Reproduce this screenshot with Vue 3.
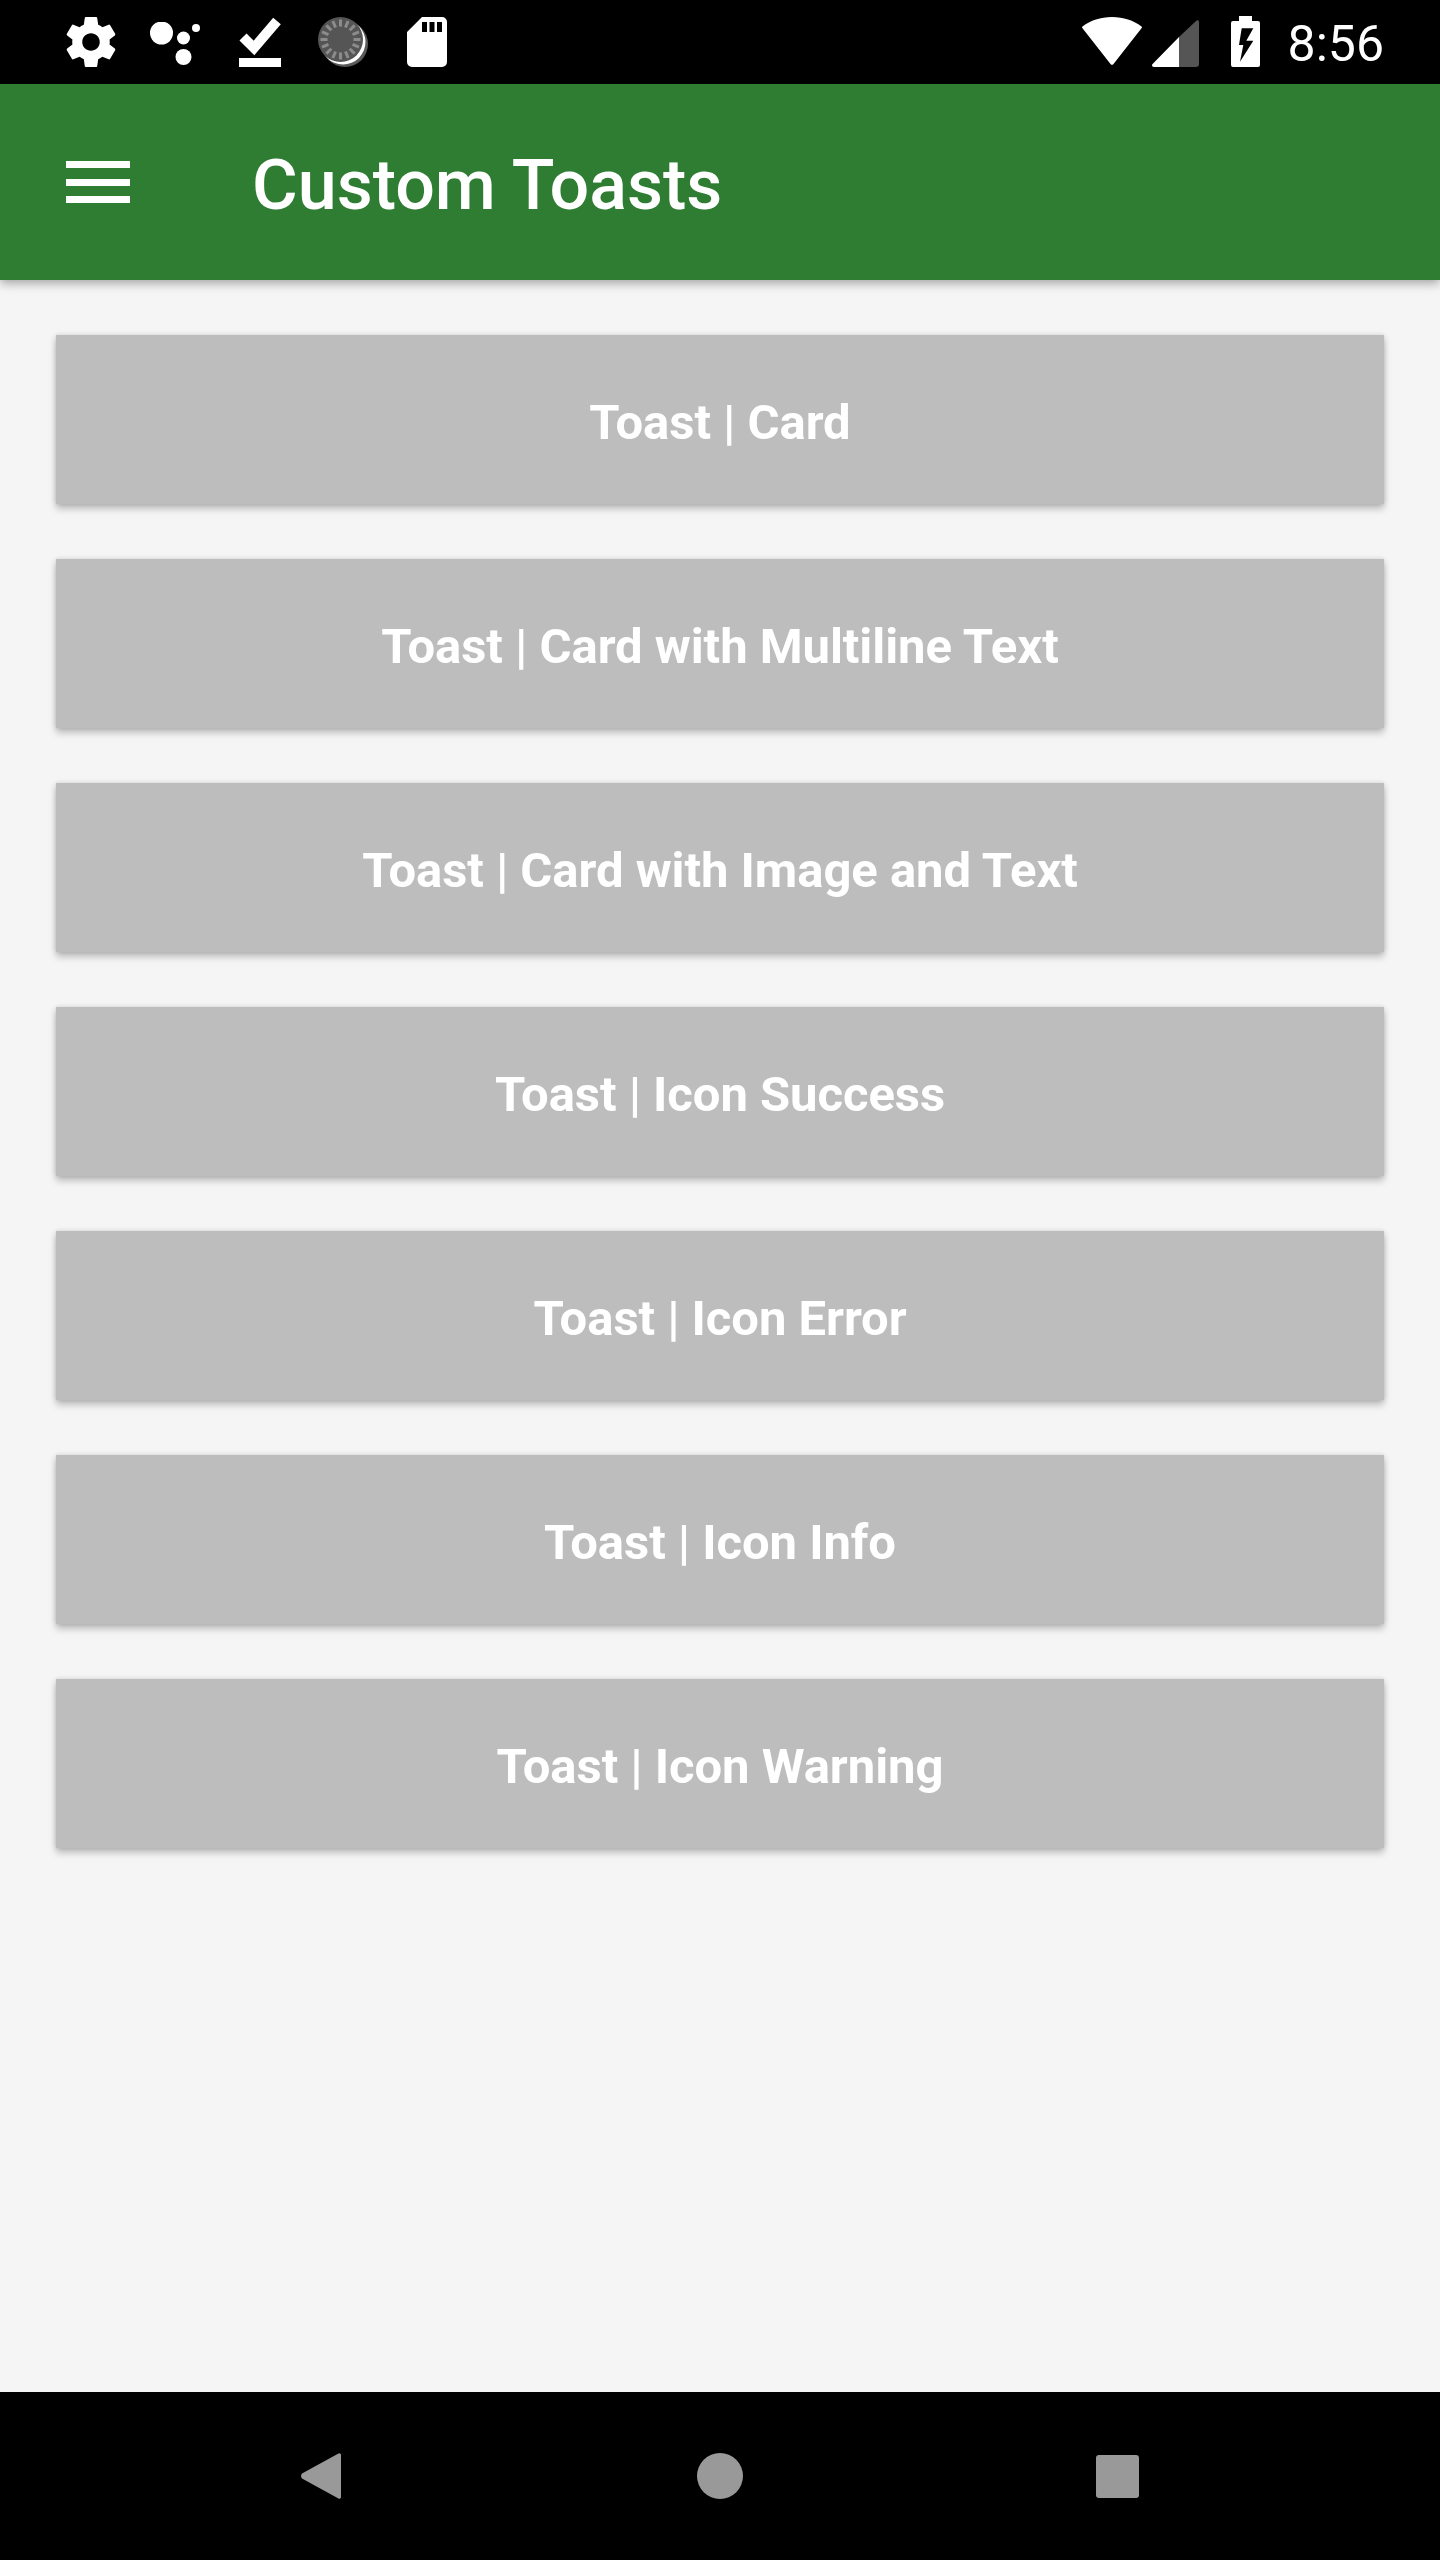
<template>
  <div class="screen">
    <div class="status-bar">
      <div class="status-left">
        <svg class="ic-gear" width="60" height="60" viewBox="0 0 24 24"><path fill="#fff" fill-rule="evenodd" d="M19.43 12.98c.04-.32.07-.64.07-.98s-.03-.66-.07-.98l2.11-1.65c.19-.15.24-.42.12-.64l-2-3.46c-.12-.22-.39-.3-.61-.22l-2.49 1c-.52-.4-1.08-.73-1.69-.98l-.38-2.65C14.46 2.18 14.25 2 14 2h-4c-.25 0-.46.18-.49.42l-.38 2.65c-.61.25-1.17.59-1.69.98l-2.49-1c-.23-.09-.49 0-.61.22l-2 3.46c-.13.22-.07.49.12.64l2.11 1.65c-.04.32-.07.65-.07.98s.03.66.07.98l-2.11 1.65c-.19.15-.24.42-.12.64l2 3.46c.12.22.39.3.61.22l2.49-1c.52.4 1.08.73 1.69.98l.38 2.65c.03.24.24.42.49.42h4c.25 0 .46-.18.49-.42l.38-2.65c.61-.25 1.17-.59 1.69-.98l2.49 1c.23.09.49 0 .61-.22l2-3.46c.12-.22.07-.49-.12-.64l-2.11-1.65zM12 15.5c-1.93 0-3.5-1.57-3.5-3.5s1.57-3.5 3.5-3.5 3.500 1.57 3.5 3.5-1.57 3.5-3.5 3.5z"/></svg>
        <svg class="ic-dots" width="52" height="44" viewBox="0 0 52 44" fill="#fff">
          <circle cx="11.5" cy="11" r="11.5"/>
          <circle cx="33.5" cy="16" r="6.5"/>
          <circle cx="33.5" cy="35" r="8"/>
          <circle cx="46" cy="6" r="4"/>
        </svg>
        <svg class="ic-check" width="42" height="50" viewBox="0 0 42 50" fill="#fff">
          <path d="M4 20 15 31 38 4" fill="none" stroke="#fff" stroke-width="10"/>
          <rect x="0" y="41" width="42" height="9"/>
        </svg>
        <svg class="ic-disc" width="50" height="50" viewBox="0 0 50 50">
          <circle cx="27" cy="27" r="23" fill="#5a5a5a"/>
          <circle cx="25" cy="25" r="22.500" fill="#fff"/>
          <circle cx="22.500" cy="22.500" r="22.500" fill="#555"/>
          <g stroke="#8c8c8c" stroke-width="3">
            <line v-for="a in ticks" :key="a" x1="22.5" y1="2.5" x2="22.5" y2="9.5" :transform="`rotate(${a} 22.5 22.5)`"/>
          </g>
        </svg>
        <svg class="ic-sd" width="40" height="50" viewBox="0 0 40 50">
          <path fill="#fff" fill-rule="evenodd" d="M15 0h20a5 5 0 0 1 5 5v40a5 5 0 0 1-5 5H5a5 5 0 0 1-5-5V15zM15 5v10h5V5zM22.5 5v10h5V5zM30 5v10h5V5z"/>
        </svg>
      </div>
      <div class="status-right">
        <svg class="ic-wifi" width="60" height="48" viewBox="0 0 60 48"><path fill="#fff" d="M30 0c11.5 0 21.500 3.500 29.500 9.500.6.500.6 1 .2 1.500L31.500 47a2 2 0 0 1-3 0L.3 11c-.4-.5-.4-1 .2-1.500C8.500 3.500 18.500 0 30 0z"/></svg>
        <svg class="ic-signal" width="47" height="47" viewBox="0 0 47 47">
          <path fill="#555" d="M27 17 44 1c1.200-1.300 3-.5 3 1v42a3 3 0 0 1-3 3H27z"/>
          <path fill="#fff" d="M27 17v30H2c-1.800 0-2.600-1.800-1.400-3z"/>
        </svg>
        <svg class="ic-battery" width="29" height="51" viewBox="0 0 29 51">
          <path fill="#fff" d="M8 0h13v5h6a2 2 0 0 1 2 2v42a2 2 0 0 1-2 2H2a2 2 0 0 1-2-2V7a2 2 0 0 1 2-2h6z"/>
          <path fill="#000" d="M10.700 12.300h11.600l-7 12.400h7L9 45.700 12.300 29H8z"/>
        </svg>
        <span class="clock">8:56</span>
      </div>
    </div>
    <header class="app-bar">
      <div class="menu-icon">
        <span></span><span></span><span></span>
      </div>
      <h1 class="title">Custom Toasts</h1>
    </header>
    <main class="content">
      <button v-for="label in buttons" :key="label" class="toast-btn">{{ label }}</button>
    </main>
    <nav class="nav-bar">
      <svg width="40" height="46" viewBox="0 0 40 46"><path fill="#999" d="M37 .8c1.300-1.300 3-.5 3 1.200v42c0 1.700-1.700 2.500-3 1.200L1 25.500c-1.300-1.400-1.300-3.600 0-5z"/></svg>
      <div class="nav-circle"></div>
      <div class="nav-square"></div>
    </nav>
  </div>
</template>

<script setup>
const buttons = [
  'Toast | Card',
  'Toast | Card with Multiline Text',
  'Toast | Card with Image and Text',
  'Toast | Icon Success',
  'Toast | Icon Error',
  'Toast | Icon Info',
  'Toast | Icon Warning'
]

const ticks = Array.from({ length: 16 }, (_, i) => i * 22.5)
</script>

<style>
html,
body {
  margin: 0;
  background: #f5f5f5;
}
</style>

<style scoped>
.screen {
  width: 1440px;
  height: 2560px;
  display: flex;
  flex-direction: column;
  background: #f5f5f5;
  font-family: Roboto, "Liberation Sans", sans-serif;
  overflow: hidden;
}

.status-bar {
  height: 84px;
  flex: none;
  background: #000;
  display: flex;
  justify-content: space-between;
}

.status-left {
  display: flex;
  align-items: flex-start;
  padding: 12px 0 0 61px;
}

.ic-dots {
  margin: 10px 0 0 29px;
}

.ic-check {
  margin: 5px 0 0 37px;
}

.ic-disc {
  margin: 5px 0 0 37px;
}

.ic-sd {
  margin: 5px 0 0 39px;
}

.status-right {
  display: flex;
  align-items: flex-start;
  padding-right: 56px;
}

.ic-wifi {
  margin-top: 17px;
}

.ic-signal {
  margin: 20px 0 0 10px;
}

.ic-battery {
  margin: 16px 0 0 32px;
}

.clock {
  margin: 15px 0 0 28px;
  font-size: 50px;
  line-height: 58px;
  color: #fff;
}

.app-bar {
  height: 196px;
  flex: none;
  background: #2e7d32;
  display: flex;
  align-items: center;
  box-shadow: 0 3px 10px rgba(0, 0, 0, 0.35);
  position: relative;
}

.menu-icon {
  width: 64px;
  margin-left: 66px;
  display: flex;
  flex-direction: column;
  gap: 10.5px;
}

.menu-icon span {
  height: 7px;
  background: #fff;
}

.title {
  margin: 6px 0 0 122px;
  font-size: 70px;
  font-weight: 500;
  color: #fff;
}

.content {
  flex: 1;
  padding: 55px 56px 0;
  display: flex;
  flex-direction: column;
  gap: 55px;
}

.toast-btn {
  height: 169px;
  border: none;
  padding: 5px 0 0;
  background: #bdbdbd;
  color: #fff;
  font-family: inherit;
  font-size: 49px;
  font-weight: 700;
  letter-spacing: -0.05px;
  box-shadow: 0 5px 7px rgba(0, 0, 0, 0.22), 0 0 5px rgba(0, 0, 0, 0.14);
}

.nav-bar {
  height: 168px;
  flex: none;
  background: #000;
  display: flex;
  align-items: center;
  padding-left: 301px;
}

.nav-circle {
  width: 46px;
  height: 46px;
  margin-left: 356px;
  border-radius: 50%;
  background: #999;
}

.nav-square {
  width: 43px;
  height: 43px;
  margin-left: 353px;
  border-radius: 3px;
  background: #999;
}
</style>
